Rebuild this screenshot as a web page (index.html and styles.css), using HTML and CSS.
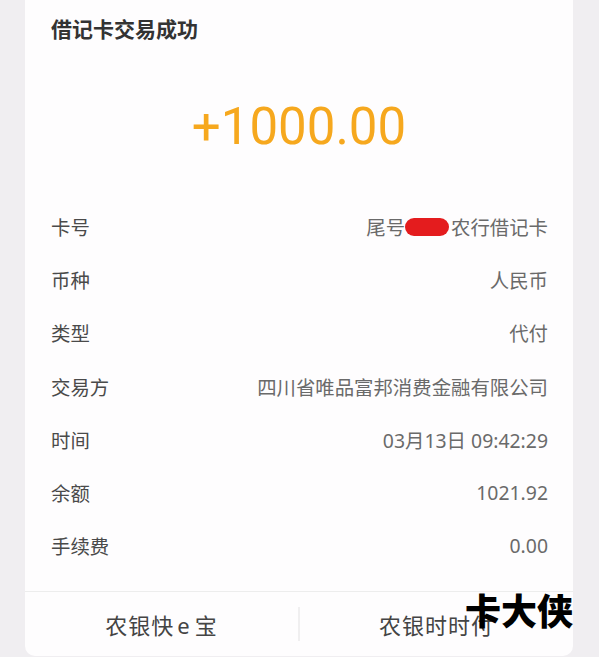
FILE: index.html
```html
<!DOCTYPE html>
<html lang="zh-CN">
<head>
  <meta charset="UTF-8" />
  <meta name="viewport" content="width=device-width, initial-scale=1.0"/>
  <title>借记卡交易成功</title>
  <link rel="stylesheet" href="styles.css">
</head>
<body>
  <div class="card">
    <h1 class="title">借记卡交易成功</h1>
    <div class="amount">+1000.00</div>

    <div class="rows">
      <div class="row"><span class="label">卡号</span><span class="value">尾号<span class="mask"></span>农行借记卡</span></div>
      <div class="row"><span class="label">币种</span><span class="value">人民币</span></div>
      <div class="row"><span class="label">类型</span><span class="value">代付</span></div>
      <div class="row"><span class="label">交易方</span><span class="value">四川省唯品富邦消费金融有限公司</span></div>
      <div class="row"><span class="label">时间</span><span class="value">03月13日 09:42:29</span></div>
      <div class="row"><span class="label">余额</span><span class="value">1021.92</span></div>
      <div class="row"><span class="label">手续费</span><span class="value">0.00</span></div>
    </div>

    <div class="actions">
      <a class="action" href="#">农银快<span class="latin">e</span>宝</a>
      <span class="sep"></span>
      <a class="action" href="#">农银时时付</a>
    </div>

    <div class="watermark">卡大侠</div>
  </div>
</body>
</html>
```

FILE: styles.css
```css
body { margin: 0; background: #f0eef1; font-family: "Noto Sans", "Noto Sans CJK SC", sans-serif; }
.card { position: relative; margin: 0 26px 0 25px; height: 656px; background: #fefdfe; border-radius: 0 0 10px 10px; display: flex; flex-direction: column; }
.title { margin: 0; padding: 15px 26px 0; font-size: 21px; line-height: 28px; font-weight: bold; color: #333; }
.amount { margin-top: 54px; text-align: center; font-family: Roboto, sans-serif; font-size: 51px; line-height: 60px; color: #f6a81e; }
.rows { margin-top: 43px; padding: 0 25px 0 26px; }
.row { display: flex; justify-content: space-between; align-items: center; height: 53.2px; font-size: 19.4px; }
.label { color: #4a4a4a; }
.value { color: #6a6a6a; display: flex; align-items: center; }
.mask { display: inline-block; width: 44px; height: 18px; margin-right: 2px; border-radius: 9px; background: #e41c1e; }
.actions { margin-top: auto; height: 64px; border-top: 1px solid #ededed; display: flex; align-items: center; }
.action { flex: 1; text-align: center; font-size: 22px; letter-spacing: 1px; color: #444; text-decoration: none; }
.latin { padding: 0 4px 0 3px; }
.sep { width: 2px; height: 34px; background: #f0eff0; }
.watermark { position: absolute; left: 440px; top: 590px; font-size: 36px; font-weight: 900; color: #000; line-height: 44px; }
```
